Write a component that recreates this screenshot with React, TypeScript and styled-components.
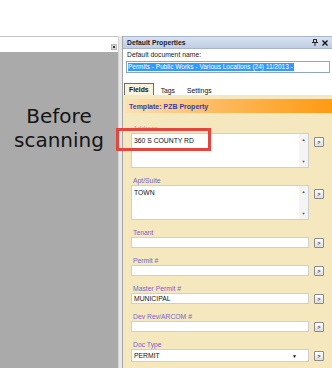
import styled, { createGlobalStyle } from "styled-components";

const GlobalStyle = createGlobalStyle`
  html, body {
    margin: 0;
    padding: 0;
    background: #ffffff;
  }
  body {
    font-family: "Liberation Sans", Arial, sans-serif;
  }
`;

const Screen = styled.div`
  position: relative;
  width: 332px;
  height: 368px;
  overflow: hidden;
  display: flex;
  flex-direction: column;
  background: #ffffff;
`;

const TopSpace = styled.div`
  height: 36px;
  flex-shrink: 0;
`;

const Workspace = styled.div`
  flex: 1;
  display: flex;
  min-height: 0;
`;

const ScanPane = styled.div`
  width: 118px;
  display: flex;
  flex-direction: column;
  border-top: 1px solid #c4c4c4;
`;

const ScanToolbar = styled.div`
  height: 15px;
  display: flex;
  align-items: flex-end;
  justify-content: flex-end;
  padding: 0 1px 2px 0;
  box-sizing: border-box;
  background: #ffffff;
`;

const PinBox = styled.div`
  width: 4px;
  height: 4px;
  background: #d8d8d8;
  border: 1px solid #b8b8b8;
  display: flex;
  align-items: center;
  justify-content: center;

  &::after {
    content: "";
    width: 2px;
    height: 2px;
    background: #333333;
  }
`;

const Canvas = styled.div`
  flex: 1;
  background: #aaaaaa;
  padding-top: 52px;
  text-align: center;
  font-family: "DejaVu Sans", sans-serif;
  font-size: 20px;
  line-height: 24px;
  color: #141414;
`;

const Splitter = styled.div`
  width: 3px;
  background: #e8e8e8;
  border-left: 1px solid #d4d4d4;
`;

const PropsPane = styled.div`
  flex: 1;
  display: flex;
  flex-direction: column;
  border-left: 1px solid #a4a4a4;
  background: #ffffff;
  min-width: 0;
`;

const PaneHeader = styled.div`
  height: 11px;
  display: flex;
  align-items: center;
  padding: 0 4px 0 4px;
  background: linear-gradient(#d8e2f1, #bfcde3);
  border-top: 1px solid #a6b5cc;
  border-bottom: 1px solid #a6b5cc;
  font-size: 6.8px;
  font-weight: bold;
  color: #1c1c2c;
`;

const HeaderTitle = styled.span`
  flex: 1;
`;

const HeaderIcons = styled.div`
  display: flex;
  gap: 4px;
  align-items: center;
`;

const NameSection = styled.div`
  padding: 2px 2px 0 3px;
`;

const SmallText = styled.div`
  font-size: 6.8px;
  line-height: 8px;
  color: #1a1a1a;
  padding-left: 1px;
`;

const NameInput = styled.div`
  margin-top: 2px;
  height: 12px;
  box-sizing: border-box;
  border: 1px solid #8ea6c4;
  padding: 1px 1px;
  display: flex;
  align-items: center;
`;

const Selected = styled.span`
  background: #3399ff;
  color: #ffffff;
  font-size: 6.5px;
  line-height: 8px;
  white-space: nowrap;
  padding-right: 1px;
`;

const TabStrip = styled.div`
  margin-top: 10px;
  height: 12px;
  display: flex;
  align-items: flex-end;
  padding-left: 1px;
`;

const Tab = styled.div<{ $active?: boolean }>`
  height: ${(p) => (p.$active ? "12px" : "10px")};
  display: flex;
  align-items: center;
  padding: 0 4px;
  font-size: 6.8px;
  color: #111111;
  box-sizing: border-box;
  border: ${(p) => (p.$active ? "1px solid #6c6c6c" : "1px solid transparent")};
  border-bottom: none;
  background: ${(p) => (p.$active ? "#fbf3dc" : "transparent")};
  font-weight: ${(p) => (p.$active ? "bold" : "normal")};
  margin-right: 2px;
`;

const Content = styled.div`
  flex: 1;
  background: #f6e8be;
  padding: 4px 0 0 3px;
`;

const TemplateBar = styled.div`
  height: 14px;
  display: flex;
  align-items: center;
  padding-left: 3px;
  background: linear-gradient(to right, #fbe0b4, #fdb95e 45%, #ff9a12);
  font-size: 7px;
  font-weight: bold;
  color: #3b3ba0;
`;

const FieldList = styled.div`
  margin-top: 11px;
  padding-left: 5px;
  display: flex;
  flex-direction: column;
  gap: 8px;
`;

const Field = styled.div`
  display: grid;
  grid-template-columns: 178px 10px;
  column-gap: 5px;
`;

const Label = styled.div<{ $faded?: boolean }>`
  grid-column: 1 / 3;
  height: 9px;
  line-height: 9px;
  font-size: 6.8px;
  color: #7565c6;
  padding-left: 2px;
  opacity: ${(p) => (p.$faded ? 0.55 : 1)};
`;

const Box = styled.div<{ $h?: number }>`
  height: ${(p) => p.$h ?? 11}px;
  box-sizing: border-box;
  background: #ffffff;
  border: 1px solid #cfcfcf;
  display: flex;
  font-size: 6.8px;
  color: #111111;
`;

const BoxText = styled.div<{ $top?: boolean }>`
  flex: 1;
  padding: ${(p) => (p.$top ? "3px 0 0 2px" : "0 0 0 2px")};
  display: flex;
  align-items: ${(p) => (p.$top ? "flex-start" : "center")};
  line-height: 8px;
  white-space: nowrap;
`;

const ScrollTrack = styled.div`
  width: 9px;
  background: #f4f4f4;
  display: flex;
  flex-direction: column;
  justify-content: space-between;
  align-items: center;
  padding: 4px 0 3px;
  box-sizing: border-box;
  font-size: 4px;
  line-height: 4px;
  color: #555555;
`;

const DropArrow = styled.div`
  width: 16px;
  display: flex;
  align-items: center;
  justify-content: flex-start;
  font-size: 5px;
  color: #111111;
`;

const MoreButton = styled.div<{ $offset: number }>`
  margin-top: ${(p) => p.$offset}px;
  width: 10px;
  height: 10px;
  box-sizing: border-box;
  border: 1px solid #8a8a8a;
  border-radius: 1px;
  background: linear-gradient(#ffffff, #dedede);
  display: flex;
  align-items: center;
  justify-content: center;
  font-size: 5px;
  font-weight: bold;
  color: #333333;
`;

const Callout = styled.div`
  position: absolute;
  left: 116px;
  top: 128px;
  width: 95px;
  height: 23px;
  box-sizing: border-box;
  border: 3px solid #e4463f;
`;

const PinIcon = () => (
  <svg width="6" height="7" viewBox="0 0 6 7">
    <path d="M1.5 0.5h3v3h-3z" fill="none" stroke="#222" strokeWidth="1" />
    <path d="M0 3.5h6M3 3.5v3.5" stroke="#222" strokeWidth="1" />
  </svg>
);

const CloseIcon = () => (
  <svg width="6" height="6" viewBox="0 0 6 6">
    <path d="M0.5 0.5l5 5M5.5 0.5l-5 5" stroke="#111" strokeWidth="1.4" />
  </svg>
);

type FieldDef = {
  label: string;
  value?: string;
  kind: "area" | "line" | "select";
  faded?: boolean;
};

const fields: FieldDef[] = [
  { label: "Address", value: "360 S COUNTY RD", kind: "area", faded: true },
  { label: "Apt/Suite", value: "TOWN", kind: "area" },
  { label: "Tenant", kind: "line" },
  { label: "Permit #", kind: "line" },
  { label: "Master Permit #", value: "MUNICIPAL", kind: "line" },
  { label: "Dev Rev/ARCOM #", kind: "line" },
  { label: "Doc Type", value: "PERMIT", kind: "select" },
];

const FieldRow = ({ f }: { f: FieldDef }) => {
  if (f.kind === "area") {
    return (
      <Field>
        <Label $faded={f.faded}>{f.label}</Label>
        <Box $h={35}>
          <BoxText $top>{f.value}</BoxText>
          <ScrollTrack>
            <span>▲</span>
            <span>▼</span>
          </ScrollTrack>
        </Box>
        <MoreButton $offset={4}>&gt;</MoreButton>
      </Field>
    );
  }
  if (f.kind === "select") {
    return (
      <Field>
        <Label>{f.label}</Label>
        <Box $h={13}>
          <BoxText>{f.value}</BoxText>
          <DropArrow>▼</DropArrow>
        </Box>
        <MoreButton $offset={2}>&gt;</MoreButton>
      </Field>
    );
  }
  return (
    <Field>
      <Label>{f.label}</Label>
      <Box $h={11}>
        <BoxText>{f.value}</BoxText>
      </Box>
      <MoreButton $offset={1}>&gt;</MoreButton>
    </Field>
  );
};

export default function App() {
  return (
    <>
      <GlobalStyle />
      <Screen>
        <TopSpace />
        <Workspace>
          <ScanPane>
            <ScanToolbar>
              <PinBox />
            </ScanToolbar>
            <Canvas>
              Before
              <br />
              scanning
            </Canvas>
          </ScanPane>
          <Splitter />
          <PropsPane>
            <PaneHeader>
              <HeaderTitle>Default Properties</HeaderTitle>
              <HeaderIcons>
                <PinIcon />
                <CloseIcon />
              </HeaderIcons>
            </PaneHeader>
            <NameSection>
              <SmallText>Default document name:</SmallText>
              <NameInput>
                <Selected>Permits - Public Works - Various Locations (24) 11/2013 -</Selected>
              </NameInput>
            </NameSection>
            <TabStrip>
              <Tab $active>Fields</Tab>
              <Tab>Tags</Tab>
              <Tab>Settings</Tab>
            </TabStrip>
            <Content>
              <TemplateBar>Template: PZB Property</TemplateBar>
              <FieldList>
                {fields.map((f) => (
                  <FieldRow key={f.label} f={f} />
                ))}
              </FieldList>
            </Content>
          </PropsPane>
        </Workspace>
        <Callout />
      </Screen>
    </>
  );
}
